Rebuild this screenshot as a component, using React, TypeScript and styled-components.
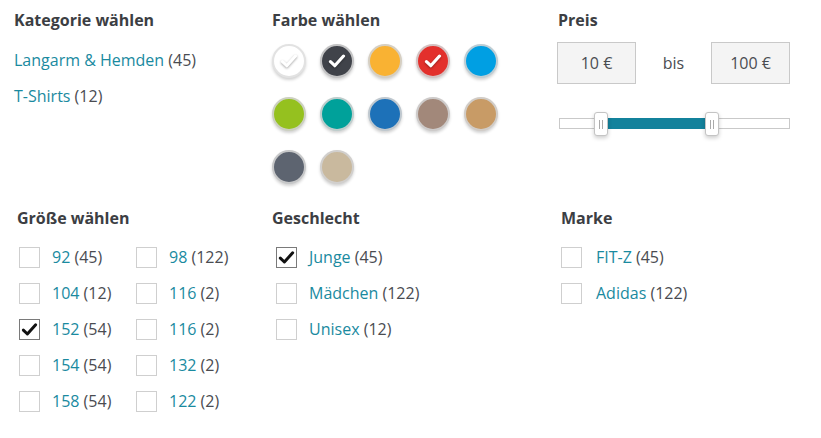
import React from "react";
import styled, { createGlobalStyle } from "styled-components";

const GlobalStyle = createGlobalStyle`
  body {
    margin: 0;
    background: #fff;
    font-family: "Open Sans", "Liberation Sans", sans-serif;
    color: #44464b;
  }
`;

const categories = [
  { label: "Langarm & Hemden", count: 45 },
  { label: "T-Shirts", count: 12 },
];

const colors = [
  { c: "#ffffff", checked: true, light: true },
  { c: "#40434a", checked: true },
  { c: "#f9b233" },
  { c: "#e3302c", checked: true },
  { c: "#009fe3" },
  { c: "#95c11f" },
  { c: "#00a19a" },
  { c: "#1d71b8" },
  { c: "#a2887a" },
  { c: "#c89b66" },
  { c: "#5d6470" },
  { c: "#c9b99e" },
];

const sizes = [
  { label: "92", count: 45 },
  { label: "98", count: 122 },
  { label: "104", count: 12 },
  { label: "116", count: 2 },
  { label: "152", count: 54, checked: true },
  { label: "116", count: 2 },
  { label: "154", count: 54 },
  { label: "132", count: 2 },
  { label: "158", count: 54 },
  { label: "122", count: 2 },
];

const genders = [
  { label: "Junge", count: 45, checked: true },
  { label: "Mädchen", count: 122 },
  { label: "Unisex", count: 12 },
];

const brands = [
  { label: "FIT-Z", count: 45 },
  { label: "Adidas", count: 122 },
];

const Page = styled.div`
  width: 821px;
  height: 438px;
  box-sizing: border-box;
  padding-top: 9px;
`;

const Section = styled.div`
  display: grid;
  grid-template-columns: 272px 286px 1fr;
`;

const Column = styled.div<{ $pl: number }>`
  padding-left: ${(p) => p.$pl}px;
`;

const Heading = styled.h3`
  margin: 0;
  font-size: 16px;
  font-weight: 700;
  line-height: 22px;
  color: #3c3e43;
`;

const LinkList = styled.div`
  display: flex;
  flex-direction: column;
  gap: 14px;
  margin-top: 18px;
`;

const LinkRow = styled.div`
  font-size: 16px;
  line-height: 22px;
`;

const Link = styled.a`
  color: #1a8a9f;
  text-decoration: none;
`;

const Count = styled.span`
  color: #4a4c51;
`;

const Swatches = styled.div`
  display: grid;
  grid-template-columns: repeat(5, 34px);
  column-gap: 14px;
  row-gap: 19px;
  margin-top: 13px;
`;

const Swatch = styled.div<{ $c: string; $light?: boolean }>`
  width: 34px;
  height: 34px;
  border-radius: 50%;
  box-sizing: border-box;
  background: ${(p) => p.$c};
  border: 2px solid ${(p) => (p.$light ? "#e2e2e2" : "rgba(210,210,210,0.9)")};
  box-shadow: 0 2px 3px rgba(0, 0, 0, 0.18);
  display: flex;
  align-items: center;
  justify-content: center;
`;

const PriceRow = styled.div`
  display: flex;
  align-items: center;
  margin-top: 11px;
  margin-left: -1px;
`;

const PriceBox = styled.div`
  width: 79px;
  height: 42px;
  box-sizing: border-box;
  border: 1px solid #c9c9c9;
  background: #f4f4f4;
  display: flex;
  align-items: center;
  justify-content: center;
  font-size: 16px;
  color: #4a4c51;
`;

const Bis = styled.span`
  width: 75px;
  text-align: center;
  font-size: 16px;
  color: #4a4c51;
`;

const Slider = styled.div`
  position: relative;
  width: 231px;
  height: 11px;
  margin-top: 34px;
  margin-left: 1px;
  box-sizing: border-box;
  border: 1px solid #c9c9c9;
  background: #fff;
`;

const Range = styled.div`
  position: absolute;
  top: -1px;
  bottom: -1px;
  background: #13829c;
`;

const Handle = styled.div`
  position: absolute;
  top: -7px;
  width: 14px;
  height: 24px;
  box-sizing: border-box;
  border: 1px solid #c4c4c4;
  border-radius: 3px;
  background: #fff;
  box-shadow: 0 2px 4px rgba(0, 0, 0, 0.2);
  display: flex;
  align-items: center;
  justify-content: center;
  gap: 2px;
  &::before,
  &::after {
    content: "";
    width: 1px;
    height: 9px;
    background: #aaa;
  }
`;

const BottomSection = styled(Section)`
  margin-top: 23px;
`;

const CheckGrid = styled.div<{ $cols: number }>`
  display: grid;
  grid-template-columns: ${(p) => (p.$cols > 1 ? `repeat(${p.$cols}, 117px)` : "max-content")};
  row-gap: 14px;
  margin-top: 17px;
`;

const CheckRow = styled.label<{ $gap: number; $indent: number }>`
  display: flex;
  align-items: center;
  gap: ${(p) => p.$gap}px;
  padding-left: ${(p) => p.$indent}px;
  font-size: 16px;
  line-height: 22px;
  height: 22px;
  white-space: nowrap;
`;

const Box = styled.span<{ $checked?: boolean }>`
  width: 21px;
  height: 21px;
  box-sizing: border-box;
  border: 1px solid ${(p) => (p.$checked ? "#7a7a7a" : "#cfcfcf")};
  background: #fff;
  display: flex;
  align-items: center;
  justify-content: center;
  flex-shrink: 0;
`;

const Check = ({ color = "#111", size = 16, shadow = false }: { color?: string; size?: number; shadow?: boolean }) => (
  <svg width={size} height={size} viewBox="0 0 16 16" style={shadow ? { filter: "drop-shadow(0 1px 1px rgba(0,0,0,0.35))" } : undefined}>
    <path d="M2.2 8.6 L6 12.2 L13.8 3.6" fill="none" stroke={color} strokeWidth="2.8" strokeLinecap="round" strokeLinejoin="round" />
  </svg>
);

type Item = { label: string; count: number; checked?: boolean };

const CheckItem = ({ item, gap, indent }: { item: Item; gap: number; indent: number }) => (
  <CheckRow $gap={gap} $indent={indent}>
    <Box $checked={item.checked}>{item.checked && <Check size={17} />}</Box>
    <span>
      <Link>{item.label}</Link> <Count>({item.count})</Count>
    </span>
  </CheckRow>
);

export default function App() {
  return (
    <Page>
      <GlobalStyle />
      <Section>
        <Column $pl={14}>
          <Heading>Kategorie wählen</Heading>
          <LinkList>
            {categories.map((c) => (
              <LinkRow key={c.label}>
                <Link>{c.label}</Link> <Count>({c.count})</Count>
              </LinkRow>
            ))}
          </LinkList>
        </Column>
        <Column $pl={0}>
          <Heading>Farbe wählen</Heading>
          <Swatches>
            {colors.map((s, i) => (
              <Swatch key={i} $c={s.c} $light={s.light}>
                {s.checked && <Check color="#fff" size={18} shadow />}
              </Swatch>
            ))}
          </Swatches>
        </Column>
        <Column $pl={0}>
          <Heading>Preis</Heading>
          <PriceRow>
            <PriceBox>10 €</PriceBox>
            <Bis>bis</Bis>
            <PriceBox>100 €</PriceBox>
          </PriceRow>
          <Slider>
            <Range style={{ left: "42px", width: "111px" }} />
            <Handle style={{ left: "34px" }} />
            <Handle style={{ left: "145px" }} />
          </Slider>
        </Column>
      </Section>
      <BottomSection>
        <Column $pl={17}>
          <Heading>Größe wählen</Heading>
          <CheckGrid $cols={2}>
            {sizes.map((s, i) => (
              <CheckItem key={i} item={s} gap={12} indent={2} />
            ))}
          </CheckGrid>
        </Column>
        <Column $pl={0}>
          <Heading>Geschlecht</Heading>
          <CheckGrid $cols={1}>
            {genders.map((s, i) => (
              <CheckItem key={i} item={s} gap={12} indent={4} />
            ))}
          </CheckGrid>
        </Column>
        <Column $pl={3}>
          <Heading>Marke</Heading>
          <CheckGrid $cols={1}>
            {brands.map((s, i) => (
              <CheckItem key={i} item={s} gap={14} indent={0} />
            ))}
          </CheckGrid>
        </Column>
      </BottomSection>
    </Page>
  );
}
